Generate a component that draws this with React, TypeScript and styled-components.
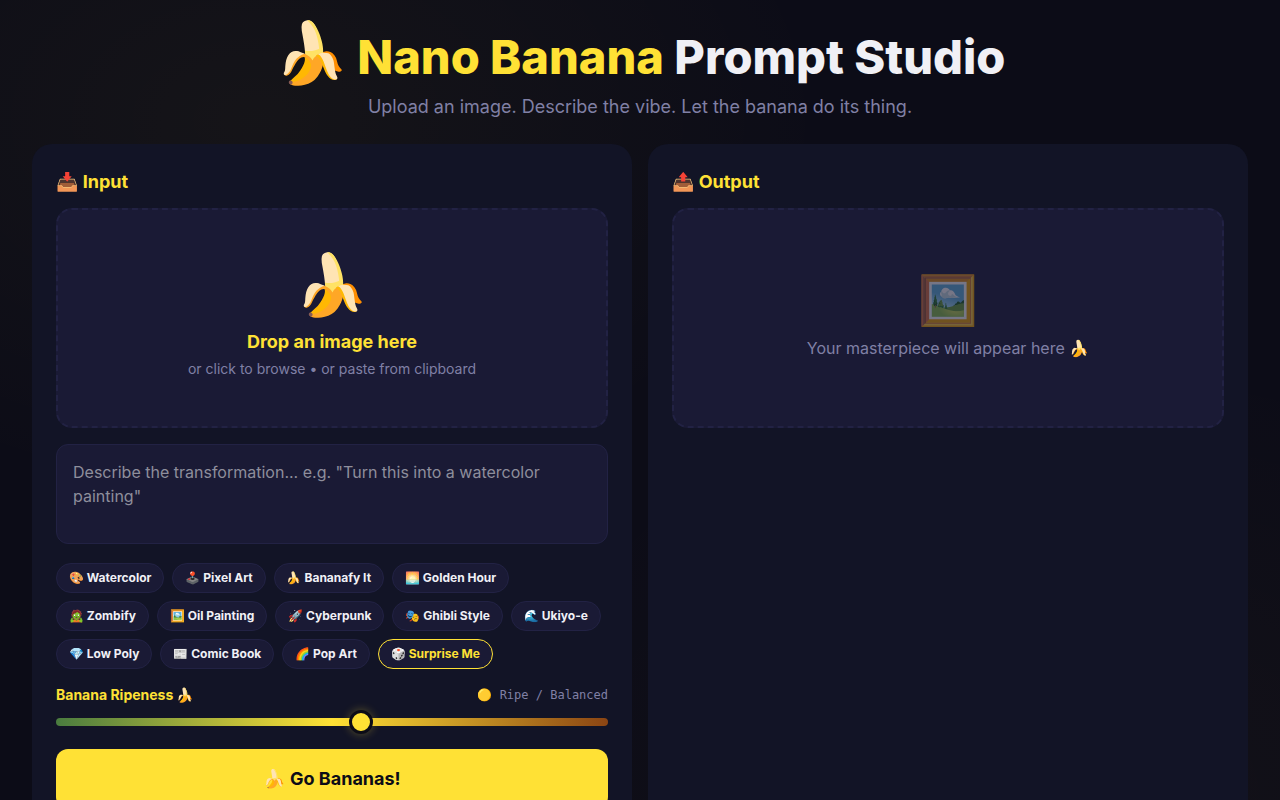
import React, { useState } from "react";
import styled, { createGlobalStyle } from "styled-components";

const color = {
  yellow: "#ffe135",
  page: "#0c0c17",
  panel: "#121426",
  field: "#1a1a35",
  line: "#222244",
  text: "#f0f0f5",
  muted: "#8080a5",
};

const sans = `Inter, "Liberation Sans", "Noto Color Emoji", sans-serif`;

const GlobalStyle = createGlobalStyle`
  *, *::before, *::after { box-sizing: border-box; }
  body {
    margin: 0;
    min-height: 100vh;
    color: ${color.text};
    background:
      radial-gradient(ellipse at 20% 15%, rgba(255, 225, 53, 0.04) 0%, transparent 40%) fixed,
      radial-gradient(ellipse at 85% 100%, rgba(255, 190, 53, 0.03) 0%, transparent 40%) fixed,
      ${color.page};
    font-family: ${sans};
    font-size: 16px;
    line-height: 24px;
  }
  h1, h2, p { margin: 0; }
  button, textarea, input { font: inherit; color: inherit; }
`;

const Page = styled.div`
  padding: 14px 32px 32px;
`;

const Header = styled.header`
  text-align: center;
  padding-bottom: 24px;
`;

const Title = styled.h1`
  display: flex;
  align-items: baseline;
  justify-content: center;
  gap: 8px;
  font-size: 47px;
  line-height: 72px;
  font-weight: 800;
`;

const Accent = styled.span`
  color: ${color.yellow};
`;

const BigEmoji = styled.span`
  font-size: 60px;
  line-height: 76px;
`;

const Tagline = styled.p`
  color: ${color.muted};
  font-size: 18px;
  line-height: 27px;
`;

const Panels = styled.main`
  display: grid;
  grid-template-columns: repeat(auto-fit, minmax(400px, 1fr));
  gap: 16px;
`;

const Panel = styled.section`
  display: flex;
  flex-direction: column;
  gap: 16px;
  min-width: 0;
  padding: 24px;
  border-radius: 20px;
  background: ${color.panel};
`;

const PanelTitle = styled.h2`
  margin-bottom: -4px;
  color: ${color.yellow};
  font-size: 18px;
  line-height: 28px;
  font-weight: 700;
`;

const DropBox = styled.button`
  display: flex;
  flex-direction: column;
  align-items: center;
  justify-content: center;
  min-height: 220px;
  padding: 24px 24px 32px;
  border: 2px dashed ${color.line};
  border-radius: 16px;
  background: ${color.field};
  cursor: pointer;
`;

const ResultBox = styled.div`
  display: flex;
  flex-direction: column;
  align-items: center;
  justify-content: center;
  min-height: 220px;
  padding: 24px 24px 36px;
  border: 2px dashed ${color.line};
  border-radius: 16px;
  background: ${color.field};
  color: ${color.muted};
`;

const DropTitle = styled.strong`
  margin-top: 6px;
  color: ${color.yellow};
  font-size: 18px;
  line-height: 28px;
  font-weight: 700;
`;

const DropHint = styled.span`
  color: ${color.muted};
  font-size: 14px;
  line-height: 26px;
`;

const FadedEmoji = styled.span`
  font-size: 48px;
  line-height: 72px;
  opacity: 0.4;
`;

const Prompt = styled.textarea`
  display: block;
  width: 100%;
  height: 100px;
  padding: 15px 16px;
  border: 1px solid ${color.line};
  border-radius: 12px;
  outline: none;
  resize: none;
  background: ${color.field};
  &::placeholder { color: #8e8e9c; opacity: 1; }
`;

const Chips = styled.div`
  display: flex;
  flex-wrap: wrap;
  gap: 8px;
  padding-top: 3px;
`;

const Chip = styled.button<{ $accent?: boolean }>`
  height: 30px;
  padding: 0 12px;
  border: 1px solid ${(p) => (p.$accent ? color.yellow : color.line)};
  border-radius: 15px;
  background: ${color.field};
  color: ${(p) => (p.$accent ? color.yellow : color.text)};
  font-size: 12px;
  font-weight: 700;
  white-space: nowrap;
  cursor: pointer;
`;

const Ripeness = styled.div`
  display: flex;
  flex-direction: column;
  gap: 8px;
`;

const RipenessHead = styled.div`
  display: flex;
  justify-content: space-between;
  font-size: 14px;
  line-height: 20px;
`;

const RipenessLabel = styled.label`
  color: ${color.yellow};
  font-weight: 700;
`;

const RipenessValue = styled.output`
  color: ${color.muted};
  font-family: "DejaVu Sans Mono", monospace;
  font-size: 12px;
`;

const Slider = styled.input`
  appearance: none;
  width: 100%;
  height: 8px;
  margin: 5px 0 7px;
  border-radius: 4px;
  outline: none;
  background: linear-gradient(to right, #4a7c3f, ${color.yellow} 50%, #8b4513);
  &::-webkit-slider-thumb {
    appearance: none;
    width: 24px;
    height: 24px;
    border: 3px solid ${color.page};
    border-radius: 50%;
    background: ${color.yellow};
    box-shadow: 0 0 10px rgba(255, 225, 53, 0.3);
  }
`;

const GoButton = styled.button`
  height: 60px;
  border: 0;
  border-radius: 12px;
  background: ${color.yellow};
  color: ${color.page};
  font-size: 18px;
  font-weight: 700;
  cursor: pointer;
`;

const presets = [
  "🎨 Watercolor", "🕹️ Pixel Art", "🍌 Bananafy It", "🌅 Golden Hour",
  "🧟 Zombify", "🖼️ Oil Painting", "🚀 Cyberpunk", "🎭 Ghibli Style", "🌊 Ukiyo-e",
  "💎 Low Poly", "📰 Comic Book", "🌈 Pop Art",
];

const stage = (n: number) =>
  n < 4 ? "🟢 Green / Subtle" : n < 8 ? "🟡 Ripe / Balanced" : "🟤 Overripe / Wild";

export default function App() {
  const [ripeness, setRipeness] = useState(6);
  const [prompt, setPrompt] = useState("");
  return (
    <Page>
      <GlobalStyle />
      <Header>
        <Title>
          <BigEmoji>🍌</BigEmoji>
          <span><Accent>Nano Banana</Accent> Prompt Studio</span>
        </Title>
        <Tagline>Upload an image. Describe the vibe. Let the banana do its thing.</Tagline>
      </Header>
      <Panels>
        <Panel>
          <PanelTitle>📥 Input</PanelTitle>
          <DropBox type="button">
            <BigEmoji>🍌</BigEmoji>
            <DropTitle>Drop an image here</DropTitle>
            <DropHint>or click to browse • or paste from clipboard</DropHint>
          </DropBox>
          <Prompt
            aria-label="Transformation prompt"
            placeholder={'Describe the transformation... e.g. "Turn this into a watercolor painting"'}
            value={prompt}
            onChange={(e) => setPrompt(e.target.value)}
          />
          <Chips>
            {presets.map((p) => (
              <Chip key={p} type="button" onClick={() => setPrompt(p)}>{p}</Chip>
            ))}
            <Chip type="button" $accent>🎲 Surprise Me</Chip>
          </Chips>
          <Ripeness>
            <RipenessHead>
              <RipenessLabel htmlFor="ripeness">Banana Ripeness 🍌</RipenessLabel>
              <RipenessValue htmlFor="ripeness">{stage(ripeness)}</RipenessValue>
            </RipenessHead>
            <Slider
              id="ripeness" type="range" min={1} max={10} value={ripeness}
              onChange={(e) => setRipeness(Number(e.target.value))}
            />
          </Ripeness>
          <GoButton type="button">🍌 Go Bananas!</GoButton>
        </Panel>
        <Panel>
          <PanelTitle>📤 Output</PanelTitle>
          <ResultBox>
            <FadedEmoji>🖼️</FadedEmoji>
            <p>Your masterpiece will appear here 🍌</p>
          </ResultBox>
        </Panel>
      </Panels>
    </Page>
  );
}
